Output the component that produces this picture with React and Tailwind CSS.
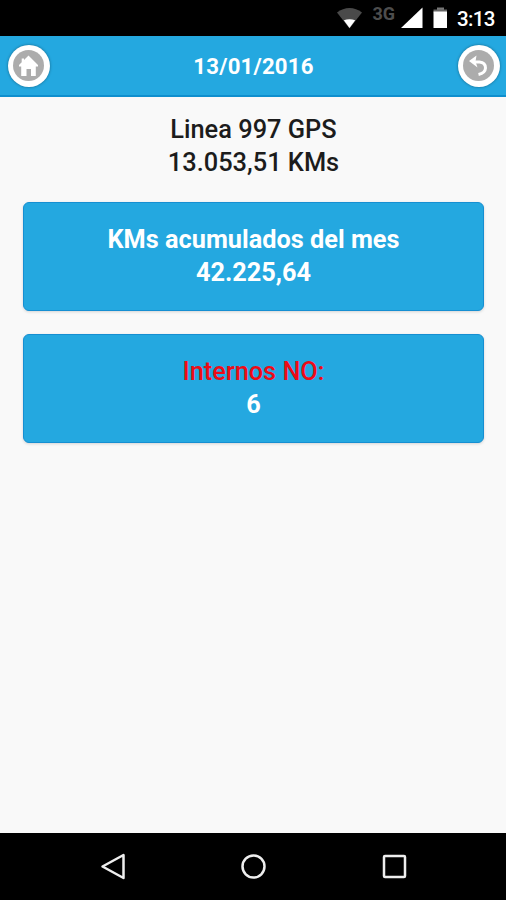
function StatusBar() {
  return (
    <div className="flex h-9 shrink-0 bg-black">
      <svg width="506" height="36" viewBox="0 0 506 36" role="img" aria-label="Status">
        <path d="M337 12.5C344.500 6.500 354.500 6.500 362 12.500L349.500 28.500Z" fill="#4a4a4a" />
        <path d="M343.800 20.300Q349.500 18 355.200 20.300L349.500 28Z" fill="#fff" />
        <text x="372.500" y="19.500" fill="#4d4d4d" fontFamily="Roboto, sans-serif" fontSize="18" fontWeight="700" textLength="22.500">3G</text>
        <path d="M401 28L422.500 7.500V28Z" fill="#fff" />
        <path d="M437 7.500H444V10H437Z" fill="#777" />
        <path d="M433.500 9.500H447V12.500H433.500Z" fill="#666" />
        <path d="M433.500 11.500H447V28H433.500Z" fill="#fff" />
        <text x="457" y="26" fill="#fff" fontFamily="Roboto, sans-serif" fontSize="20.500" fontWeight="500" textLength="38.500">3:13</text>
      </svg>
    </div>
  );
}

function RoundButton({ label, children }) {
  return (
    <button aria-label={label} className="flex size-[42px] items-center justify-center rounded-full bg-white shadow-[0_0_3px_rgba(0,0,0,0.4)]">
      <span className="flex size-[31px] items-center justify-center rounded-full bg-[#acacac]">{children}</span>
    </button>
  );
}

function Header() {
  return (
    <header className="flex h-[61px] shrink-0 items-center justify-between border-b-2 border-[#0f8fce] bg-[#24a8e0] pr-[6.500px] pl-[7.500px]">
      <RoundButton label="Inicio">
        <svg width="31" height="31" viewBox="0 0 31 31" fill="#fff">
          <path d="M15.500 5.500L25 15V16.500H22.800V26H18V19H13.500V26H8.200V16.500H6V15L8.700 12.300V8.500H11V10Z" />
        </svg>
      </RoundButton>
      <h1 className="text-[22.200px] leading-[28px] font-bold tracking-[0.2px] text-white">13/01/2016</h1>
      <RoundButton label="Volver">
        <svg width="31" height="31" viewBox="0 0 31 31" fill="none">
          <path d="M10 12H16.500Q22.500 12.500 22.500 18Q22.300 23 15.500 24.500" stroke="#fff" strokeWidth="3" />
          <path d="M6 11L13.500 5.500L12.500 11.500L14.500 17.500Z" fill="#fff" />
        </svg>
      </RoundButton>
    </header>
  );
}

function Card({ title, value, titleClass }) {
  return (
    <section className="flex h-[109px] flex-col items-center rounded-[6px] border border-[#168fd2] bg-[#24a8e0] pt-[21px] text-[25.300px] leading-[32.500px] font-bold text-white shadow-[0_1px_3px_rgba(0,0,0,0.15)]">
      <div className={titleClass}>{title}</div>
      <div>{value}</div>
    </section>
  );
}

export default function App() {
  return (
    <div className="flex h-[900px] w-[506px] flex-col overflow-hidden bg-[#f9f9f9] font-['Roboto',sans-serif]">
      <StatusBar />
      <Header />
      <main className="flex flex-1 flex-col gap-[23px] pr-[22px] pl-[23px]">
        <div className="mt-4 mb-px flex flex-col items-center text-[25.400px] leading-[32.500px] font-medium text-[#1c1c1c]">
          <div>Linea 997 GPS</div>
          <div>13.053,51 KMs</div>
        </div>
        <Card title="KMs acumulados del mes" value="42.225,64" titleClass="" />
        <Card title="Internos NO:" value="6" titleClass="font-medium text-[#ee0b16]" />
      </main>
      <nav className="flex h-[67px] shrink-0 bg-black">
        <svg width="506" height="67" viewBox="0 0 506 67" fill="none" stroke="#eee" strokeWidth="2.500" strokeLinejoin="round">
          <path d="M102.500 33.500L123.500 22V45Z" />
          <circle cx="253.500" cy="33.500" r="11" />
          <rect x="384" y="23" width="21" height="21" rx="1" />
        </svg>
      </nav>
    </div>
  );
}
